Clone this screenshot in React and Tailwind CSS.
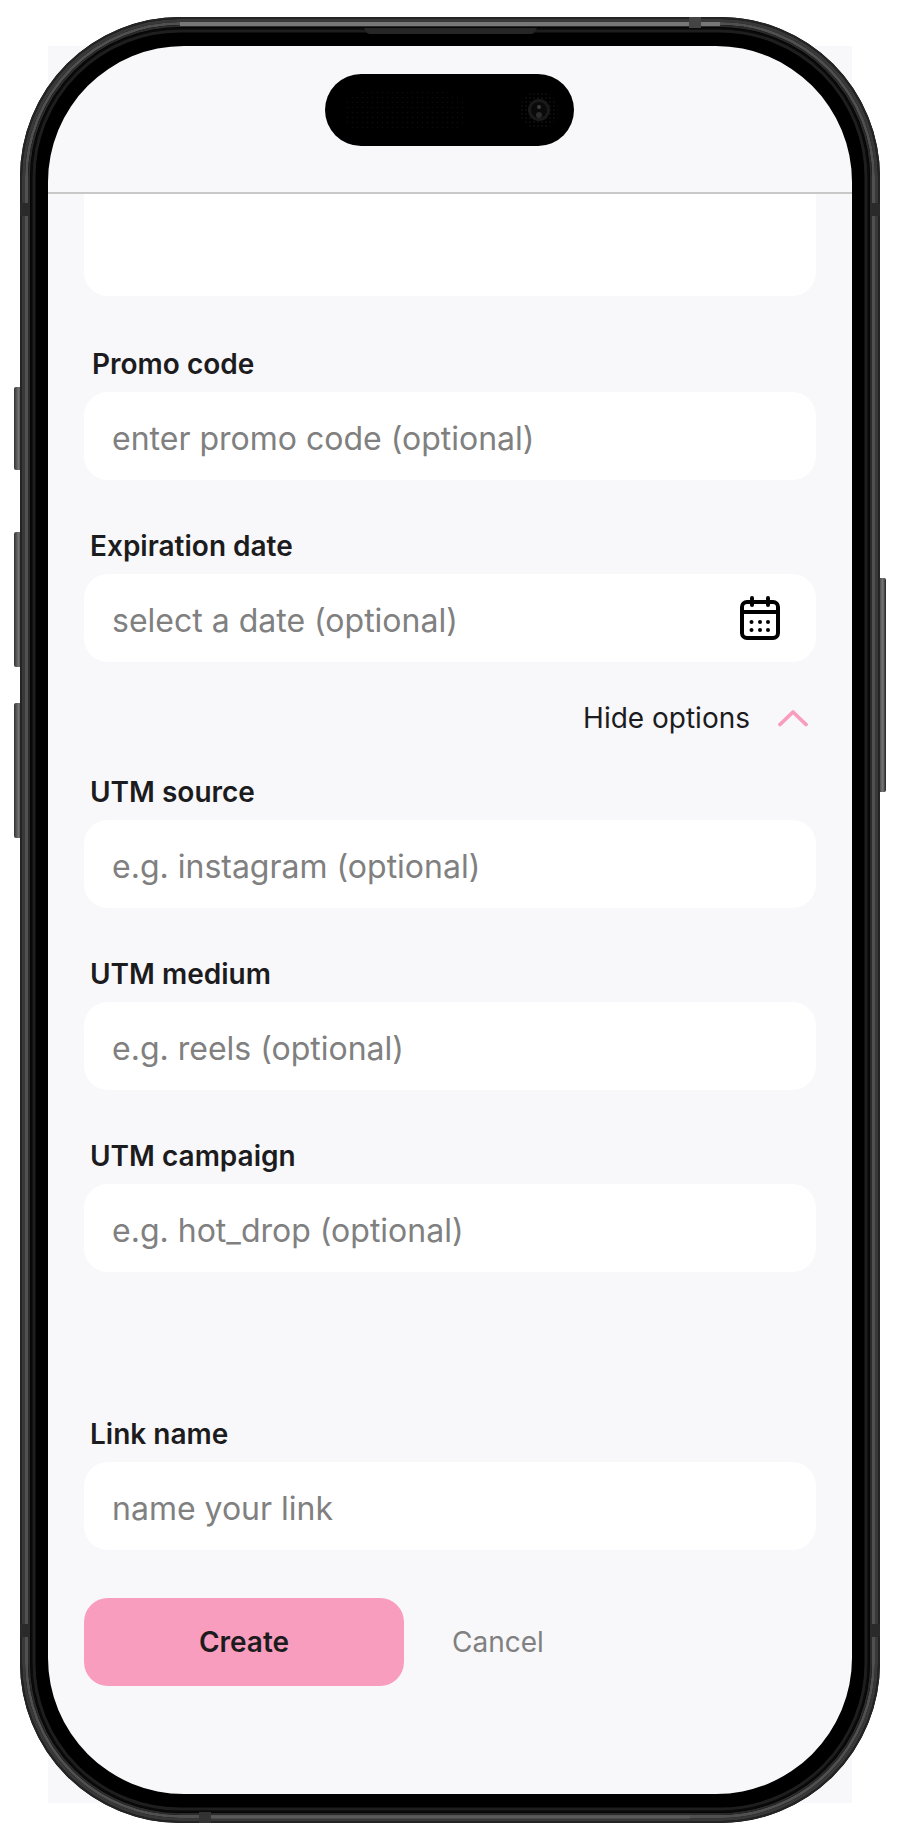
const Field = ({ label, placeholder, labelClass = 'pl-[6px]', children }) => (
    <div className="flex flex-col">
        <label className={`h-9 mb-2.5 flex items-center text-[28px] font-semibold text-[#1c1c1e] ${labelClass}`}>{label}</label>
        <div className="h-[88px] rounded-3xl bg-white flex items-center pl-7 pr-[36px]">
            <input
                className="flex-1 min-w-0 pt-[6px] bg-transparent outline-none text-[32px] text-[#1c1c1e] placeholder:text-[#808080]"
                placeholder={placeholder}
            />
            {children}
        </div>
    </div>
)

const CalendarIcon = () => (
    <svg width="40" height="44" viewBox="0 0 40 44" fill="none" stroke="#000" strokeWidth="4" strokeLinecap="round" className="shrink-0">
        <rect x="2" y="6" width="36" height="36" rx="5" />
        <path d="M2 16H38" />
        <path d="M12 2V9M28 2V9" />
        <g fill="#000" stroke="none">
            <circle cx="11.5" cy="26" r="2" />
            <circle cx="20" cy="26" r="2" />
            <circle cx="28" cy="26" r="2" />
            <circle cx="11.5" cy="34" r="2" />
            <circle cx="20" cy="34" r="2" />
            <circle cx="28" cy="34" r="2" />
        </g>
    </svg>
)

// phone body drawn on top of the screen, hollow in the middle
const PhoneFrame = () => (
    <svg width="900" height="1840" viewBox="0 0 900 1840" fill="none" className="absolute inset-0 pointer-events-none">
        <defs>
            <linearGradient id="sideBtn" x1="0" y1="0" x2="1" y2="0">
                <stop offset="0" stopColor="#333" />
                <stop offset="0.6" stopColor="#777" />
                <stop offset="1" stopColor="#222" />
            </linearGradient>
            <pattern id="grill" width="5" height="5" patternUnits="userSpaceOnUse">
                <circle cx="2.5" cy="2.5" r="0.7" fill="#0e0e0e" />
            </pattern>
            <pattern id="lensDots" width="4" height="4" patternUnits="userSpaceOnUse">
                <circle cx="2" cy="2" r="0.7" fill="#1c1c1c" />
            </pattern>
        </defs>

        {/* side buttons */}
        <rect x="14" y="387" width="8" height="83" rx="2" fill="url(#sideBtn)" />
        <rect x="14" y="532" width="8" height="135" rx="2" fill="url(#sideBtn)" />
        <rect x="14" y="703" width="8" height="135" rx="2" fill="url(#sideBtn)" />
        <rect x="878" y="578" width="8" height="214" rx="2" fill="url(#sideBtn)" />

        {/* titanium band + black bezel */}
        <path
            fillRule="evenodd"
            fill="#000"
            d="M180 17H720A160 160 0 0 1 880 177V1663A160 160 0 0 1 720 1823H180A160 160 0 0 1 20 1663V177A160 160 0 0 1 180 17ZM184 46A136 136 0 0 0 48 182V1658A136 136 0 0 0 184 1794H716A136 136 0 0 0 852 1658V182A136 136 0 0 0 716 46Z"
        />
        <rect x="21" y="18" width="858" height="1804" rx="159" stroke="#242424" strokeWidth="2" />
        <rect x="23.5" y="20.5" width="853" height="1799" rx="156.5" stroke="#383838" strokeWidth="3" />
        <rect x="26.5" y="23.5" width="847" height="1793" rx="153.5" stroke="#505050" strokeWidth="3" />
        <rect x="29" y="26" width="842" height="1788" rx="151" stroke="#2b2b2b" strokeWidth="2" />
        <rect x="31.5" y="28.5" width="837" height="1783" rx="148.5" stroke="#0a0a0a" strokeWidth="2" />
        <rect x="34" y="31" width="832" height="1778" rx="146" stroke="#1e1e1e" strokeWidth="3" />

        {/* brighter highlight along the top and bottom edges */}
        <path d="M180 24H720" stroke="#777" strokeWidth="4" />
        <path d="M210 1817H690" stroke="#5a5a5a" strokeWidth="3" />

        {/* antenna lines */}
        <rect x="689" y="17" width="12" height="11" fill="#444" />
        <rect x="199" y="1812" width="12" height="11" fill="#333" />
        <rect x="20" y="203" width="9" height="13" fill="#2a2a2a" />
        <rect x="871" y="203" width="9" height="13" fill="#2a2a2a" />
        <rect x="20" y="1624" width="9" height="13" fill="#2a2a2a" />
        <rect x="871" y="1624" width="9" height="13" fill="#2a2a2a" />

        {/* earpiece */}
        <path d="M364 28H537L534 33Q533 34 530 34H371Q368 34 367 33Z" fill="#262626" />

        {/* dynamic island */}
        <rect x="325" y="74" width="249" height="72" rx="36" fill="#000" />
        <rect x="343" y="92" width="123" height="40" rx="20" fill="url(#grill)" />
        <circle cx="539" cy="110" r="19" fill="url(#lensDots)" />
        <circle cx="539" cy="110" r="11" fill="#1a1a1a" />
        <circle cx="539" cy="110" r="8" fill="#0a0a0a" />
        <circle cx="539" cy="107" r="2" fill="#3f3f3f" />
        <circle cx="539" cy="115" r="3" fill="#2c2c2c" />
    </svg>
)

export default function App() {
    return (
        <div className="relative w-[900px] h-[1840px] bg-white overflow-hidden font-[Inter,sans-serif]">
            <div className="ml-12 mt-[46px] w-[804px] h-[1757px] bg-[#f8f8fa] flex flex-col">
                <div className="h-[148px] shrink-0 border-b-2 border-[#c8c8c8]" />

                <div className="px-9 flex flex-col">
                    <div className="h-[102px] bg-white rounded-b-3xl" />

                    <div className="mt-[50px]">
                        <Field label="Promo code" placeholder="enter promo code (optional)" labelClass="pl-[8px]" />
                    </div>
                    <div className="mt-12">
                        <Field label="Expiration date" placeholder="select a date (optional)">
                            <CalendarIcon />
                        </Field>
                    </div>

                    <div className="mt-9 h-10 flex items-center justify-end gap-[28px] pr-[8px]">
                        <span className="text-[28px] text-[#1c1c1e]">Hide options</span>
                        <svg width="30" height="18" viewBox="0 0 30 18" fill="none" stroke="#f99dbf" strokeWidth="3.8" strokeLinecap="round" strokeLinejoin="round">
                            <path d="M2 15.5L15 3L28 15.5" />
                        </svg>
                    </div>

                    <div className="mt-9">
                        <Field label="UTM source" placeholder="e.g. instagram (optional)" />
                    </div>
                    <div className="mt-12">
                        <Field label="UTM medium" placeholder="e.g. reels (optional)" />
                    </div>
                    <div className="mt-12">
                        <Field label="UTM campaign" placeholder="e.g. hot_drop (optional)" />
                    </div>
                    <div className="mt-[144px]">
                        <Field label="Link name" placeholder="name your link" />
                    </div>

                    <div className="mt-12 flex items-center gap-12">
                        <button className="w-80 h-[88px] rounded-3xl bg-[#f99dbf] text-[28px] font-semibold text-[#1c1c1e]">Create</button>
                        <button className="text-[28px] text-[#808080]">Cancel</button>
                    </div>
                </div>
            </div>

            <PhoneFrame />
        </div>
    )
}
